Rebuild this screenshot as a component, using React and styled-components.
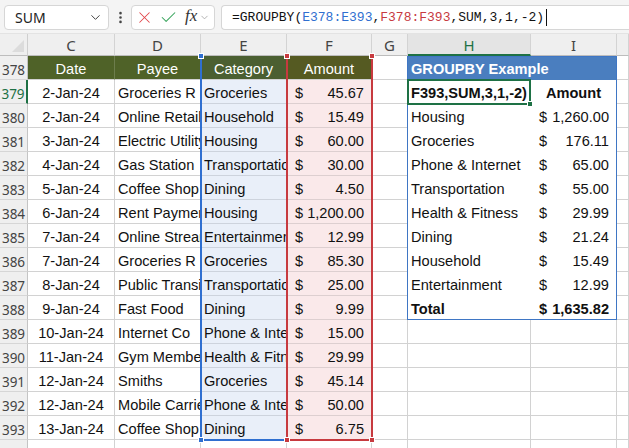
import styled, { createGlobalStyle } from 'styled-components';
import { X, Check, ChevronDown, EllipsisVertical } from 'lucide-react';

const GlobalStyle = createGlobalStyle`
  html, body { margin: 0; padding: 0; background: #fff; }
  body { font-family: "Liberation Sans", Arial, sans-serif; overflow: hidden; }
  * { box-sizing: border-box; }
`;

const rows = [
  ['2-Jan-24', 'Groceries R Us', 'Groceries', '45.67'],
  ['2-Jan-24', 'Online Retailer', 'Household', '15.49'],
  ['3-Jan-24', 'Electric Utility', 'Housing', '60.00'],
  ['4-Jan-24', 'Gas Station', 'Transportation', '30.00'],
  ['5-Jan-24', 'Coffee Shop', 'Dining', '4.50'],
  ['6-Jan-24', 'Rent Payment', 'Housing', '1,200.00'],
  ['7-Jan-24', 'Online Streaming', 'Entertainment', '12.99'],
  ['7-Jan-24', 'Groceries R Us', 'Groceries', '85.30'],
  ['8-Jan-24', 'Public Transit', 'Transportation', '25.00'],
  ['9-Jan-24', 'Fast Food', 'Dining', '9.99'],
  ['10-Jan-24', 'Internet Co', 'Phone & Internet', '15.00'],
  ['11-Jan-24', 'Gym Membership', 'Health & Fitness', '29.99'],
  ['12-Jan-24', 'Smiths', 'Groceries', '45.14'],
  ['12-Jan-24', 'Mobile Carrier', 'Phone & Internet', '50.00'],
  ['13-Jan-24', 'Coffee Shop', 'Dining', '6.75'],
];

const groups = [
  ['Housing', '1,260.00'],
  ['Groceries', '176.11'],
  ['Phone & Internet', '65.00'],
  ['Transportation', '55.00'],
  ['Health & Fitness', '29.99'],
  ['Dining', '21.24'],
  ['Household', '15.49'],
  ['Entertainment', '12.99'],
];

const letters = ['C', 'D', 'E', 'F', 'G', 'H', 'I', ''];

export default function App() {
  return (
    <>
      <GlobalStyle />
      <Toolbar>
        <NameBox>
          <span>SUM</span>
          <ChevronDown size={15} strokeWidth={1.6} color="#444" />
        </NameBox>
        <Dots>
          <EllipsisVertical size={15} strokeWidth={2.2} color="#444" />
        </Dots>
        <FxBox>
          <X size={19} strokeWidth={1.3} color="#e2464b" />
          <Check size={19} strokeWidth={1.3} color="#35a35a" />
          <Fx>fx</Fx>
          <ChevronDown size={11} strokeWidth={1.6} color="#999" />
        </FxBox>
        <FormulaBox>
          <span>=GROUPBY(</span>
          <Ref $c="#2f6fd0">E378:E393</Ref>
          <span>,</span>
          <Ref $c="#c73a3f">F378:F393</Ref>
          <span>,SUM,3,1,-2)</span>
          <Caret />
        </FormulaBox>
      </Toolbar>

      <Sheet>
        {/* column headers */}
        <Corner $row={1} $col={1}><Tri /></Corner>
        {letters.map((l, i) => (
          <ColHead key={i} $row={1} $col={i + 2} $active={l === 'H'}>{l}</ColHead>
        ))}

        {/* row numbers */}
        {Array.from({ length: 17 }, (_, i) => (
          <RowHead key={i} $row={i + 2} $col={1} $active={i === 1}>{378 + i}</RowHead>
        ))}

        {/* source table header */}
        <HeadCell $row={2} $col={2}>Date</HeadCell>
        <HeadCell $row={2} $col={3}>Payee</HeadCell>
        <HeadCell $row={2} $col={4} $bg="#4b5f31">Category</HeadCell>
        <HeadCell $row={2} $col={5} $bg="#555a22">Amount</HeadCell>

        {rows.map((r, i) => (
          <Row key={i} r={r} row={i + 3} />
        ))}

        {/* blank cells: G, J and below table */}
        {Array.from({ length: 17 }, (_, i) => (
          <Cell key={'g' + i} $row={i + 2} $col={6} />
        ))}
        {Array.from({ length: 17 }, (_, i) => (
          <Cell key={'j' + i} $row={i + 2} $col={9} />
        ))}
        {Array.from({ length: 6 }, (_, i) => (
          <Cell key={'h' + i} $row={i + 13} $col={7} />
        ))}
        {Array.from({ length: 6 }, (_, i) => (
          <Cell key={'i' + i} $row={i + 13} $col={8} />
        ))}
        <Cell $row={18} $col={2} />
        <Cell $row={18} $col={3} />
        <Cell $row={18} $col={4} />
        <Cell $row={18} $col={5} />

        {/* groupby result */}
        <Title $row={2} $col="7 / 9">GROUPBY Example</Title>
        <Cell $row={3} $col={7} $plain $bold>F393,SUM,3,1,-2)</Cell>
        <Cell $row={3} $col={8} $plain $bold $align="center">Amount</Cell>
        {groups.map(([k, v], i) => (
          <GroupRow key={k} k={k} v={v} row={i + 4} />
        ))}
        <GroupRow k="Total" v="1,635.82" row={12} bold />

        {/* overlays */}
        <TableFrame $row="2 / 13" $col="7 / 9" />
        <RangeBox $col={4} $c="#2f6fd0">
          <Handle $c="#2f6fd0" $top $left />
          <Handle $c="#2f6fd0" $top />
          <Handle $c="#2f6fd0" $left />
          <Handle $c="#2f6fd0" />
        </RangeBox>
        <RangeBox $col={5} $c="#c73a3f">
          <Handle $c="#c73a3f" $top $left />
          <Handle $c="#c73a3f" $top />
          <Handle $c="#c73a3f" $left />
          <Handle $c="#c73a3f" />
        </RangeBox>
        <ActiveCell $row={3} $col={7}>
          <FillHandle />
        </ActiveCell>
      </Sheet>
    </>
  );
}

const Row = ({ r, row }) => (
  <>
    <Cell $row={row} $col={2} $align="center">{r[0]}</Cell>
    <Cell $row={row} $col={3}>{r[1]}</Cell>
    <Cell $row={row} $col={4} $bg="#e9eff9" $grid="#cdd3dd">{r[2]}</Cell>
    <Money $row={row} $col={5} $bg="#fae9ea" $grid="#ddcfd0">
      <span>$</span>
      <span>{r[3]}</span>
    </Money>
  </>
);

const GroupRow = ({ k, v, row, bold }) => (
  <>
    <Cell $row={row} $col={7} $plain $bold={bold}>{k}</Cell>
    <Money $row={row} $col={8} $plain $bold={bold}>
      <span>$</span>
      <span>{v}</span>
    </Money>
  </>
);

/* ---------- formula bar ---------- */

const Toolbar = styled.div`
  height: 34px;
  display: flex;
  align-items: flex-start;
  padding: 5px 0 0 4px;
  background: #f4f4f4;
  border-bottom: 1px solid #e3e3e3;
  font-family: "Noto Sans", "Open Sans", sans-serif;
`;

const Box = styled.div`
  height: 25px;
  background: #fff;
  border: 1px solid #d6d6d6;
  border-radius: 4px;
  display: flex;
  align-items: center;
`;

const NameBox = styled(Box)`
  width: 105px;
  justify-content: space-between;
  padding: 0 5px 0 10px;
  font-size: 14px;
  color: #222;
`;

const Dots = styled.div`
  width: 22px;
  height: 25px;
  display: flex;
  align-items: center;
  justify-content: center;
`;

const FxBox = styled(Box)`
  width: 84px;
  padding: 0 0 0 3px;
  gap: 5px;

  & > svg:last-child {
    margin-left: -3px;
  }
`;

const Fx = styled.span`
  font-family: "Liberation Serif", "DejaVu Serif", serif;
  font-style: italic;
  font-size: 17px;
  color: #333;
  margin-top: -3px;
  margin-left: 2px;
`;

const FormulaBox = styled(Box)`
  flex: 1;
  margin-left: 6px;
  border-right: none;
  border-radius: 4px 0 0 4px;
  padding-left: 10px;
  font-family: "Liberation Mono", "DejaVu Sans Mono", monospace;
  font-size: 13px;
  color: #111;
  white-space: pre;
`;

const Ref = styled.span`
  color: ${p => p.$c};
`;

const Caret = styled.span`
  display: inline-block;
  width: 1px;
  height: 17px;
  background: #111;
  margin-left: 2px;
`;

/* ---------- sheet ---------- */

const Sheet = styled.div`
  display: grid;
  grid-template-columns: 28px 87px 86px 86px 85px 36px 123px 86px 1fr;
  grid-template-rows: 22px repeat(17, 24px);
  height: 414px;
  overflow: hidden;
  font-size: 14.6px;
  color: #111;
`;

const Placed = styled.div`
  grid-row: ${p => p.$row};
  grid-column: ${p => p.$col};
`;

const Corner = styled(Placed)`
  background: #efefef;
  border-right: 1px solid #cfcfcf;
  border-bottom: 1px solid #bdbdbd;
  position: relative;
`;

const Tri = styled.div`
  position: absolute;
  right: 3px;
  bottom: 3px;
  width: 0;
  height: 0;
  border-left: 12px solid transparent;
  border-bottom: 12px solid #dcdcdc;
`;

const ColHead = styled(Placed)`
  background: ${p => (p.$active ? '#e4e4e4' : '#efefef')};
  border-right: 1px solid #d3d3d3;
  border-bottom: ${p => (p.$active ? '2px solid #1e7145' : '1px solid #bdbdbd')};
  display: flex;
  align-items: center;
  justify-content: center;
  font-family: "Noto Sans", "Open Sans", sans-serif;
  font-size: 15px;
  color: ${p => (p.$active ? '#1e7145' : '#444')};
  padding-top: 1px;
`;

const RowHead = styled(Placed)`
  background: #efefef;
  border-right: ${p => (p.$active ? '2px solid #1e7145' : '1px solid #c4c4c4')};
  border-bottom: 1px solid #d6d6d6;
  display: flex;
  align-items: center;
  justify-content: center;
  padding-top: 4px;
  font-family: "Noto Sans", "Open Sans", sans-serif;
  font-size: 13.5px;
  color: ${p => (p.$active ? '#1e7145' : '#444')};
`;

const Cell = styled(Placed)`
  display: flex;
  align-items: center;
  justify-content: ${p => p.$align || 'flex-start'};
  padding: 2px 3px 0;
  overflow: hidden;
  white-space: nowrap;
  background: ${p => p.$bg || '#fff'};
  border-right: 1px solid ${p => (p.$plain ? '#fff' : p.$grid || '#d2d2d2')};
  border-bottom: 1px solid ${p => (p.$plain ? '#fff' : p.$grid || '#d2d2d2')};
  font-weight: ${p => (p.$bold ? 700 : 400)};
`;

const Money = styled(Cell)`
  justify-content: space-between;
  padding: 2px 7px 0 8px;
`;

const HeadCell = styled(Cell)`
  background: ${p => p.$bg || '#4f6228'};
  border-right: 1px solid #6d7d4d;
  border-bottom: 1px solid #d2d2d2;
  color: #fff;
  justify-content: center;
`;

const Title = styled(Placed)`
  background: #4a7ebf;
  color: #fff;
  font-weight: 700;
  font-size: 14.6px;
  display: flex;
  align-items: center;
  padding: 2px 3px 0;
`;

/* ---------- overlays ---------- */

const TableFrame = styled(Placed)`
  border: 1px solid #3f76c4;
  margin-left: -1px;
  z-index: 1;
  pointer-events: none;
`;

const RangeBox = styled.div`
  grid-row: 2 / 18;
  grid-column: ${p => p.$col};
  position: relative;
  z-index: 2;
  margin: 0 -1px -1px -1px;
  border: 2px solid ${p => p.$c};
  border-top: none;
  pointer-events: none;
`;

const Handle = styled.span`
  position: absolute;
  width: 6px;
  height: 6px;
  background: ${p => p.$c};
  border: 1px solid #fff;
  ${p => (p.$top ? 'top: -3px;' : 'bottom: -4px;')}
  ${p => (p.$left ? 'left: -4px;' : 'right: -4px;')}
`;

const ActiveCell = styled(Placed)`
  position: relative;
  z-index: 3;
  margin: -1px 0 -1px -1px;
  border: 2px solid #1e7145;
  pointer-events: none;
`;

const FillHandle = styled.span`
  position: absolute;
  right: -4px;
  bottom: -4px;
  width: 6px;
  height: 6px;
  background: #1e7145;
  border: 1px solid #fff;
`;
